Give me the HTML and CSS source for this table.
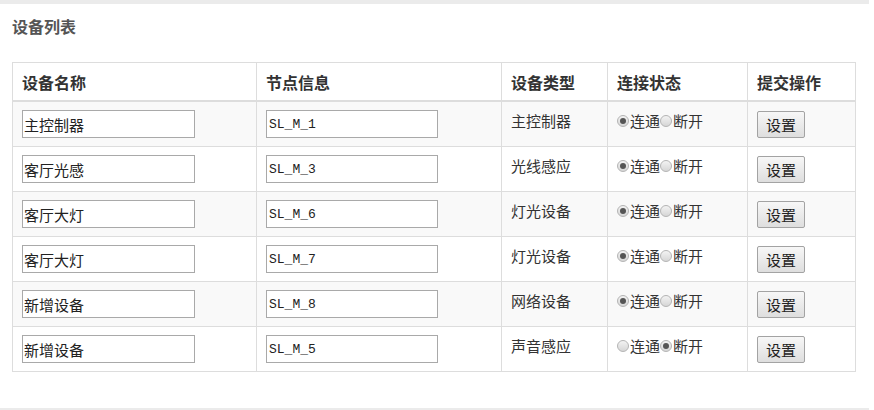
FILE: index.html
```html
<!DOCTYPE html>
<html lang="zh-CN">
<head>
<meta charset="utf-8">
<title>设备列表</title>
<link rel="stylesheet" href="styles.css">
</head>
<body>
<div class="page">
  <section class="panel">
    <h2 class="panel-title">设备列表</h2>
    <table class="device-table">
      <colgroup>
        <col class="c-name"><col class="c-node"><col class="c-type"><col class="c-state"><col class="c-op">
      </colgroup>
      <thead>
        <tr><th>设备名称</th><th>节点信息</th><th>设备类型</th><th>连接状态</th><th>提交操作</th></tr>
      </thead>
      <tbody>
        <tr>
          <td><input class="txt txt-name" type="text" value="主控制器"></td>
          <td><input class="txt txt-node" type="text" value="SL_M_1"></td>
          <td>主控制器</td>
          <td><label class="state"><input class="radio" type="radio" name="s1" checked>连通</label><label class="state"><input class="radio" type="radio" name="s1">断开</label></td>
          <td><button class="btn" type="button">设置</button></td>
        </tr>
        <tr>
          <td><input class="txt txt-name" type="text" value="客厅光感"></td>
          <td><input class="txt txt-node" type="text" value="SL_M_3"></td>
          <td>光线感应</td>
          <td><label class="state"><input class="radio" type="radio" name="s2" checked>连通</label><label class="state"><input class="radio" type="radio" name="s2">断开</label></td>
          <td><button class="btn" type="button">设置</button></td>
        </tr>
        <tr>
          <td><input class="txt txt-name" type="text" value="客厅大灯"></td>
          <td><input class="txt txt-node" type="text" value="SL_M_6"></td>
          <td>灯光设备</td>
          <td><label class="state"><input class="radio" type="radio" name="s3" checked>连通</label><label class="state"><input class="radio" type="radio" name="s3">断开</label></td>
          <td><button class="btn" type="button">设置</button></td>
        </tr>
        <tr>
          <td><input class="txt txt-name" type="text" value="客厅大灯"></td>
          <td><input class="txt txt-node" type="text" value="SL_M_7"></td>
          <td>灯光设备</td>
          <td><label class="state"><input class="radio" type="radio" name="s4" checked>连通</label><label class="state"><input class="radio" type="radio" name="s4">断开</label></td>
          <td><button class="btn" type="button">设置</button></td>
        </tr>
        <tr>
          <td><input class="txt txt-name" type="text" value="新增设备"></td>
          <td><input class="txt txt-node" type="text" value="SL_M_8"></td>
          <td>网络设备</td>
          <td><label class="state"><input class="radio" type="radio" name="s5" checked>连通</label><label class="state"><input class="radio" type="radio" name="s5">断开</label></td>
          <td><button class="btn" type="button">设置</button></td>
        </tr>
        <tr>
          <td><input class="txt txt-name" type="text" value="新增设备"></td>
          <td><input class="txt txt-node" type="text" value="SL_M_5"></td>
          <td>声音感应</td>
          <td><label class="state"><input class="radio" type="radio" name="s6">连通</label><label class="state"><input class="radio" type="radio" name="s6" checked>断开</label></td>
          <td><button class="btn" type="button">设置</button></td>
        </tr>
      </tbody>
    </table>
  </section>
</div>
</body>
</html>
```

FILE: styles.css
```css
* { box-sizing: border-box; }
html, body { margin: 0; padding: 0; background: #fff; }
body {
  font-family: "Noto Sans CJK SC", "Liberation Sans", sans-serif;
  font-size: 15px;
  color: #333;
}
.page {
  width: 869px;
  height: 410px;
  background: #ebebeb;
  padding-top: 4px;
}
.panel {
  background: #fff;
  height: 404px;
  padding: 11px 13px 0 12px;
}
.panel-title {
  margin: 0;
  font-size: 16px;
  line-height: 22px;
  font-weight: 700;
  color: #555;
}
.device-table {
  margin-top: 25px;
  width: 843px;
  border-collapse: collapse;
  table-layout: fixed;
  border: 1px solid #ddd;
}
.c-name { width: 244px; }
.c-node { width: 245px; }
.c-type { width: 106px; }
.c-state { width: 140px; }
.c-op { width: 108px; }
.device-table th,
.device-table td {
  border: 1px solid #ddd;
  padding: 8px 8px 8px 9px;
  text-align: left;
  vertical-align: top;
  line-height: 22px;
}
.device-table td { height: 45px; }
.device-table th {
  font-size: 16px;
  font-weight: 700;
  color: #333;
  line-height: 20px;
  border-bottom: 2px solid #ddd;
  padding-top: 9px;
  padding-bottom: 8px;
}
.device-table td { font-size: 15px; color: #333; }
.device-table tbody tr:nth-child(odd) td { background: #f9f9f9; }
.txt {
  display: block;
  height: 28px;
  border: 1px solid #a9a9a9;
  border-radius: 0;
  background: #fff;
  color: #222;
  margin: 0;
  padding: 1px 2px;
  outline: none;
}
.txt-name {
  width: 173px;
  font-family: "Noto Sans CJK SC", sans-serif;
  font-size: 15px;
  padding-left: 1px;
}
.txt-node {
  width: 172px;
  font-family: "Liberation Mono", monospace;
  font-size: 13px;
  padding-left: 2px;
}
.state {
  display: inline-flex;
  align-items: center;
  font-size: 15px;
  color: #333;
}
.radio {
  appearance: none;
  -webkit-appearance: none;
  width: 12px;
  height: 12px;
  margin: 0 1px 0 0;
  border: 1px solid #b5b5b5;
  border-radius: 50%;
  background: linear-gradient(#f3f3f3, #d6d6d6);
  position: relative;
  flex: none;
}
.radio:checked::after {
  content: "";
  position: absolute;
  left: 2px;
  top: 2px;
  width: 6px;
  height: 6px;
  border-radius: 50%;
  background: #555;
}
.btn {
  display: block;
  width: 48px;
  height: 27px;
  margin-top: 1px;
  padding: 0;
  border: 1px solid #a3a3a3;
  border-radius: 2px;
  background: linear-gradient(#f7f7f7, #dedede);
  font-family: "Noto Sans CJK SC", sans-serif;
  font-size: 15px;
  color: #222;
}
```
